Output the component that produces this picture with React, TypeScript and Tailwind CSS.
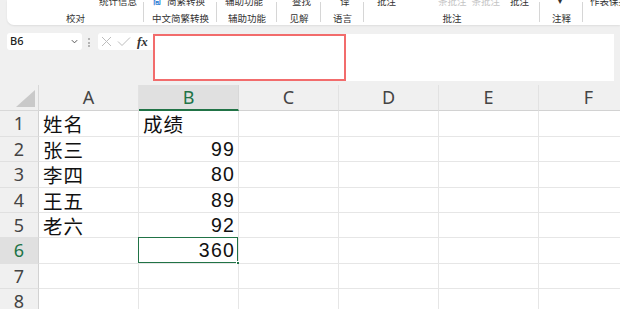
import React from "react";

const cjk = { fontFamily: '"Noto Sans CJK SC", "Noto Sans", sans-serif' };
const hdr = { fontFamily: '"Noto Sans", "Liberation Sans", sans-serif' };
const cellFont = { fontFamily: '"Liberation Sans", "Noto Sans CJK SC", sans-serif' };

function Group({
  w,
  label,
  children,
  last,
  justify = "justify-start",
  pl = 0,
  pr = 0,
}: {
  w: number;
  label: string;
  children?: React.ReactNode;
  last?: boolean;
  justify?: string;
  pl?: number;
  pr?: number;
}) {
  return (
    <div className="relative flex shrink-0 flex-col" style={{ width: w }}>
      <div
        className={`-mt-[4px] flex h-[10px] items-center whitespace-nowrap text-[9.5px] leading-[10px] text-[#333] ${justify}`}
        style={{ paddingLeft: pl, paddingRight: pr }}
      >
        {children}
      </div>
      <div className="mt-[7px] h-[10px] text-center text-[9.5px] leading-[10px] text-[#333]">{label}</div>
      {!last && <div className="absolute right-0 top-[2px] h-[20px] w-px bg-[#d6d6d6]" />}
    </div>
  );
}

const cols = ["A", "B", "C", "D", "E", "F"];
const rowHeights = [26, 25, 26, 25, 25, 26, 25, 26];
const data: Record<number, [string, string]> = {
  1: ["姓名", "成绩"],
  2: ["张三", "99"],
  3: ["李四", "80"],
  4: ["王五", "89"],
  5: ["老六", "92"],
  6: ["", "360"],
};

export default function App() {
  return (
    <div className="h-[309px] w-[620px] overflow-hidden bg-[#f0f0f0]" style={cjk}>
      {/* Ribbon */}
      <div className="ml-[7px] flex h-[25px] overflow-hidden rounded-bl-[7px] bg-white shadow-[0_1px_2px_rgba(0,0,0,0.08)]">
        <Group w={137} label="校对" justify="justify-end" pr={7}>
          统计信息
        </Group>
        <Group w={73} label="中文简繁转换" pl={9}>
          <span className="mr-[6px] text-[8px] font-bold text-[#2b7cd3]">简</span>
          简繁转换
        </Group>
        <Group w={60} label="辅助功能" pl={8}>
          辅助功能<span className="ml-[2px] text-[8px]">˅</span>
        </Group>
        <Group w={44} label="见解" pl={15}>
          查找
        </Group>
        <Group w={43} label="语言" pl={19}>
          译
        </Group>
        <Group w={176} label="批注" pl={13}>
          批注
          <span className="ml-[42px] text-[#c4c4c4]">条批注</span>
          <span className="ml-[5px] text-[#c4c4c4]">条批注</span>
          <span className="ml-[10px]">批注</span>
        </Group>
        <Group w={43} label="注释" pl={18}>
          <span className="text-[8px]">▾</span>
        </Group>
        <Group w={60} label="" pl={7} last>
          作表保护
        </Group>
      </div>

      {/* Formula bar row */}
      <div className="mt-[8px] flex h-[48px] items-start">
        <div className="ml-[7px] flex h-[17px] w-[75px] items-center justify-between rounded-[3px] bg-white pl-[3px] pr-[3px]">
          <span className="text-[11px] font-medium text-[#222]" style={hdr}>
            B6
          </span>
          <svg width="9" height="9" viewBox="0 0 10 10">
            <path d="M2 3.5 L5 6.5 L8 3.5" fill="none" stroke="#555" strokeWidth="1.1" />
          </svg>
        </div>
        <div className="ml-[6px] mt-[5px] flex h-[9px] w-[2px] flex-col justify-between">
          <div className="h-[2px] w-[2px] rounded-full bg-[#a0a0a0]" />
          <div className="h-[2px] w-[2px] rounded-full bg-[#a0a0a0]" />
          <div className="h-[2px] w-[2px] rounded-full bg-[#a0a0a0]" />
        </div>
        <div className="ml-[8px] flex h-[17px] w-[55px] items-center rounded-l-[3px] bg-white pl-[3px]">
          <svg width="11" height="11" viewBox="0 0 11 11">
            <path d="M1 1 L10 10 M10 1 L1 10" stroke="#bdbdbd" strokeWidth="1" />
          </svg>
          <svg width="14" height="11" viewBox="0 0 14 11" className="ml-[5px]">
            <path d="M1 5.5 L5 9.5 L13 1.5" fill="none" stroke="#bdbdbd" strokeWidth="1" />
          </svg>
          <span
            className="ml-[6px] text-[13px] font-bold italic leading-none text-[#333]"
            style={{ fontFamily: '"Liberation Serif", serif' }}
          >
            fx
          </span>
        </div>
        <div className="mr-[6px] mt-[1px] flex h-[47px] flex-1 bg-white">
          <div className="h-[47px] w-[193px] border-2 border-[#f26c6c]" />
        </div>
      </div>

      {/* Grid */}
      <div className="mt-[4px] grid grid-cols-[39px_100px_100px_100px_100px_100px_100px] bg-white">
        <div className="relative h-[26px] border-b border-r border-[#d8d8d8] bg-[#f0f0f0]">
          <svg className="absolute bottom-[3px] right-[3px]" width="19" height="17" viewBox="0 0 19 17">
            <path d="M19 0 L19 17 L0 17 Z" fill="#c9c9c9" />
          </svg>
        </div>
        {cols.map((c) =>
          c === "B" ? (
            <div
              key={c}
              className="flex h-[26px] items-center justify-center border-b-2 border-r border-b-[#217346] border-r-[#d8d8d8] bg-[#e0e0e0] pt-[1px] text-[18px] text-[#217346]"
              style={hdr}
            >
              {c}
            </div>
          ) : (
            <div
              key={c}
              className="flex h-[26px] items-center justify-center border-b border-r border-b-[#d2d2d2] border-r-[#e2e2e2] bg-[#f0f0f0] text-[18px] text-[#444]"
              style={hdr}
            >
              {c}
            </div>
          )
        )}
        {rowHeights.map((h, i) => {
          const r = i + 1;
          const d = data[r];
          const sel = r === 6;
          return (
            <React.Fragment key={r}>
              <div
                className={`flex items-center justify-center border-b border-r border-b-[#e0e0e0] border-r-[#d2d2d2] text-[18px] ${
                  sel ? "bg-[#e0e0e0] text-[#217346]" : "bg-[#f0f0f0] text-[#444]"
                }`}
                style={{ ...hdr, height: h }}
              >
                {r}
              </div>
              {cols.map((c, ci) => {
                const isSel = sel && c === "B";
                const txt = d ? (ci === 0 ? d[0] : ci === 1 ? d[1] : "") : "";
                const isNum = ci === 1 && r > 1;
                return (
                  <div
                    key={c}
                    className={`relative flex items-center border-b border-r border-[#e6e6e6] text-[#111] ${
                      isNum
                        ? "justify-end pr-[3px] pt-[1px] text-[19.5px] tracking-[1.2px]"
                        : "justify-start pl-[4px] pt-[1px] text-[19.5px] leading-none tracking-[1px]"
                    }`}
                    style={{ ...(isNum ? cellFont : cjk), height: h }}
                  >
                    {txt}
                    {isSel && (
                      <>
                        <div className="pointer-events-none absolute -left-px -top-px bottom-0 right-0 border border-[#217346]" />
                        <div className="absolute -bottom-[2px] -right-[2px] h-[4px] w-[4px] border border-white bg-[#217346]" />
                      </>
                    )}
                  </div>
                );
              })}
            </React.Fragment>
          );
        })}
      </div>
    </div>
  );
}
